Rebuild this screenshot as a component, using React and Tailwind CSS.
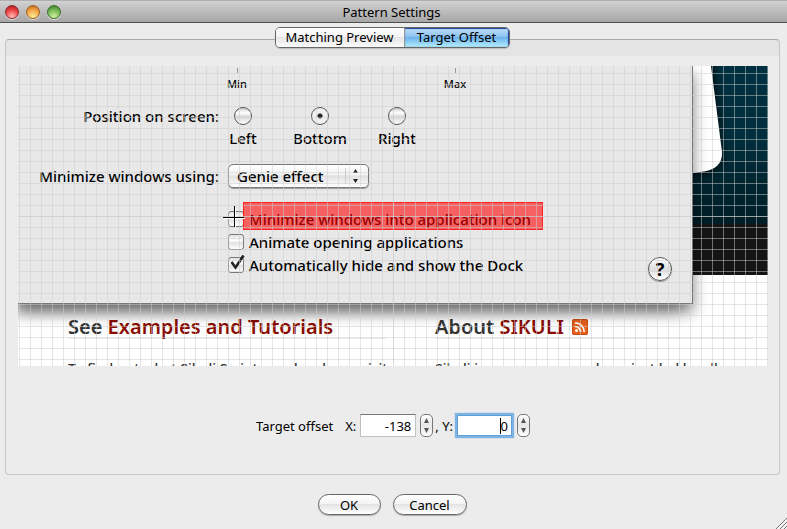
import React from 'react';

function TrafficLight({ label, className }) {
  return (
    <button
      aria-label={label}
      className={`h-[14px] w-[14px] rounded-full border shadow-[0_1px_0_#ddd] ${className}`}
    />
  );
}

function Stepper({ name }) {
  return (
    <div className="flex h-[23px] w-[13px] flex-col overflow-hidden rounded-[5px] border border-[#777] bg-gradient-to-b from-white via-[#e6e6e6] to-white">
      <button aria-label={`Increase ${name}`} className="flex flex-1 items-center justify-center">
        <svg width="5" height="5" viewBox="0 0 5 5">
          <path d="M2.5 0L5 5H0z" fill="#555" />
        </svg>
      </button>
      <button aria-label={`Decrease ${name}`} className="flex flex-1 items-center justify-center">
        <svg width="5" height="5" viewBox="0 0 5 5">
          <path d="M0 0h5L2.5 5z" fill="#555" />
        </svg>
      </button>
    </div>
  );
}

function RadioOption({ label, checked }) {
  return (
    <label className="flex w-12 flex-col items-center gap-1">
      <input
        type="radio"
        name="position"
        defaultChecked={checked}
        className="h-[18px] w-[18px] appearance-none rounded-full border border-[#555] bg-[linear-gradient(#ccc,#fff_30%,#d8d8d8_55%,#fff)] checked:bg-[radial-gradient(circle,#222_2px,#eee_3px,#f4f4f4)]"
      />
      <span className="leading-[18px]">{label}</span>
    </label>
  );
}

function CheckRow({ label, checked }) {
  return (
    <label className="flex h-[23px] items-center gap-[5px]">
      <span className="relative flex">
        <input
          type="checkbox"
          defaultChecked={checked}
          className="h-4 w-4 appearance-none rounded-[3px] border border-[#777] bg-[linear-gradient(#e2e2e2,#fff_40%,#e2e2e2_55%,#fff)]"
        />
        {checked && (
          <svg className="absolute -top-1 left-0" width="18" height="18" viewBox="0 0 18 18">
            <path d="M3.500 9L7.500 14.500L15.500 2.500" fill="none" stroke="#222" strokeWidth="2.600" />
          </svg>
        )}
      </span>
      <span>{label}</span>
    </label>
  );
}

function WebPage() {
  return (
    <div className="col-start-1 row-start-1 flex min-w-0 flex-col bg-white">
      <div className="flex h-[209px] shrink-0 justify-end bg-[linear-gradient(#003040,#002e3c_70px,#001e26_158px,#151515_158px)]">
        <svg width="76" height="209" viewBox="0 0 76 209">
          <defs>
            <filter id="glow" x="-50%" y="-20%" width="200%" height="140%">
              <feGaussianBlur stdDeviation="5" />
            </filter>
          </defs>
          <path
            d="M-20 -20H19L30 88Q31 105 8 109H-20z"
            fill="#000"
            opacity=".8"
            filter="url(#glow)"
          />
          <path d="M0 0H19L30 86Q31 104 8 106L0 107z" fill="#fff" />
          <path d="M0 158h76v51H0z" fill="#151515" />
        </svg>
      </div>
      <div className="flex pt-10 pr-[15px] pl-[50px] text-[#333]">
        <section className="w-[325px]">
          <h2 className="w-[318px] border-b border-[#e8e8e8] text-xl leading-[23px] font-semibold">
            See <span className="text-[#8b0c00]">Examples and Tutorials</span>
          </h2>
          <p className="mt-5 text-sm leading-5 font-medium whitespace-nowrap">
            To find out what Sikuli Script can do, please visit
          </p>
        </section>
        <section className="ml-[42px] flex-1">
          <h2 className="flex items-center gap-2 border-b border-[#e8e8e8] text-xl leading-[23px] font-semibold">
            <span>
              About <span className="text-[#8b0c00]">SIKULI</span>
            </span>
            <svg width="16" height="16" viewBox="0 0 16 16">
              <rect width="16" height="16" rx="2" fill="#e8601c" />
              <rect x=".5" y=".5" width="15" height="15" rx="2" fill="none" stroke="#c94a10" />
              <circle cx="4.500" cy="11.500" r="1.500" fill="#fff" />
              <path
                d="M3 7.500a5.500 5.500 0 0 1 5.500 5.500M3 3.800A9.200 9.200 0 0 1 12.200 13"
                fill="none"
                stroke="#fff"
                strokeWidth="1.700"
              />
            </svg>
          </h2>
          <p className="mt-5 text-sm leading-5 font-medium whitespace-nowrap">
            Sikuli is an open research project led by all
          </p>
        </section>
      </div>
    </div>
  );
}

function DockPanel() {
  return (
    <div className="relative col-start-1 row-start-1 mr-[75px] self-start border-r border-b border-[#777] bg-[#e8e8e8] pb-[27px] text-[15px] leading-[18px] font-medium text-black shadow-[0_8px_14px_rgba(0,0,0,0.5),-16px_8px_14px_rgba(0,0,0,0.2)]">
      <div className="flex pt-0.5 pl-[207px] text-[11px] leading-[14px]">
        <div className="flex w-6 flex-col items-center gap-1">
          <span className="h-[5px] w-px bg-[#999]" />
          <span>Min</span>
        </div>
        <div className="ml-[194px] flex w-6 flex-col items-center gap-1">
          <span className="h-[5px] w-px bg-[#999]" />
          <span>Max</span>
        </div>
      </div>
      <div className="mt-4 flex">
        <span className="w-[201px] shrink-0 text-right">Position on screen:</span>
        <div className="flex gap-[29px]">
          <RadioOption label="Left" />
          <RadioOption label="Bottom" checked />
          <RadioOption label="Right" />
        </div>
      </div>
      <div className="mt-[17px] flex items-center">
        <label htmlFor="effect" className="w-[201px] shrink-0 text-right">
          Minimize windows using:
        </label>
        <div className="relative ml-[9px] flex">
          <select
            id="effect"
            className="h-6 w-[141px] appearance-none rounded-[5px] border border-[#777] bg-[linear-gradient(#fff,#f2f2f2_45%,#e0e0e0_50%,#fff)] pl-2 shadow-[0_1px_1px_#999]"
          >
            <option>Genie effect</option>
          </select>
          <svg
            className="pointer-events-none absolute top-1 right-1"
            width="20"
            height="16"
            viewBox="0 0 20 16"
          >
            <path d="M.5 0v16" stroke="#ccc" />
            <path d="M10.500 1L13 5H8zM8 11h5l-2.500 4z" fill="#222" />
          </svg>
        </div>
      </div>
      <div className="mt-[19px] flex justify-between pr-5 pl-[210px]">
        <div>
          <CheckRow label="Minimize windows into application icon" />
          <CheckRow label="Animate opening applications" />
          <CheckRow label="Automatically hide and show the Dock" checked />
        </div>
        <button className="-mb-[5px] h-6 w-6 self-end rounded-full border border-[#555] bg-[linear-gradient(#fff,#ddd_50%,#fff)] text-lg leading-[22px] font-bold shadow-[0_1px_1px_#999]">
          ?
        </button>
      </div>
    </div>
  );
}

export default function App() {
  return (
    <div className="flex min-h-screen flex-col bg-[#ececec] font-['Noto_Sans','Lucida_Grande',sans-serif] text-[13px] leading-4 text-black">
      <header className="relative flex h-[23px] items-center justify-center border-t border-b border-t-[#b0b0b0] border-b-[#515151] bg-gradient-to-b from-[#d2d2d2] to-[#a6a6a6] pr-1">
        <div className="absolute top-1 left-[5px] flex gap-[7px]">
          <TrafficLight
            label="Close"
            className="border-[#8c2a2a] bg-[radial-gradient(circle_at_50%_90%,#ffc0c0,#f04545_55%,#a01818)]"
          />
          <TrafficLight
            label="Minimize"
            className="border-[#a06024] bg-[radial-gradient(circle_at_50%_90%,#fff09a,#f0a040_60%,#b05c18)]"
          />
          <TrafficLight
            label="Zoom"
            className="border-[#3f7030] bg-[radial-gradient(circle_at_50%_90%,#d4f5a0,#70b350_60%,#357025)]"
          />
        </div>
        <h1>Pattern Settings</h1>
      </header>

      <div
        role="tablist"
        className="relative z-10 mt-1 mr-[3px] -mb-[9px] flex h-[21px] self-center overflow-hidden rounded-[5px] border border-[#666] shadow-[0_1px_1px_#bbb]"
      >
        <button
          role="tab"
          aria-selected="false"
          className="w-[129px] border-r border-[#999] bg-[linear-gradient(#fff,#f4f4f4_45%,#e6e6e6_50%,#fafafa)] pb-0.5"
        >
          Matching Preview
        </button>
        <button
          role="tab"
          aria-selected="true"
          className="w-[104px] bg-[linear-gradient(#c4e0f8,#8cc2f0_45%,#6cb2ec_50%,#b4eefc)] pb-0.5 shadow-[inset_0_1px_1px_#1c3f9c,inset_-1px_0_1px_#1c3f9c]"
        >
          Target Offset
        </button>
      </div>

      <main className="mr-[7px] ml-[5px] rounded-[4px] border border-[#c6c6c6] border-t-[#aaa] bg-[linear-gradient(#e4e4e4_16px,#ececec_16px)] pt-[26px] pr-[11px] pb-[37px] pl-3">
        <div className="relative grid h-[300px] overflow-hidden">
          <WebPage />
          <DockPanel />
          <div className="absolute top-[136px] left-[225px] h-7 w-[300px] border border-[#ff2020] bg-[rgba(255,0,0,0.58)]" />
          <div className="absolute inset-0 bg-[linear-gradient(to_right,rgba(204,204,204,0.5)_1px,transparent_1px),linear-gradient(rgba(204,204,204,0.5)_1px,transparent_1px)] bg-[size:11px_11px] bg-[position:1px_7px]" />
          <div className="absolute top-[150px] h-px w-full bg-[#ccc]/50" />
          <div className="absolute left-[375px] h-full w-px bg-[#ccc]/50" />
          <svg
            className="absolute top-[140px] left-[205px]"
            width="23"
            height="23"
            viewBox="0 0 23 23"
            fill="none"
            shapeRendering="crispEdges"
          >
            <path d="M12.500 1v21M1 12.500h21" stroke="#fff" />
            <path d="M11.500 0v21M0 11.500h21" stroke="#000" />
          </svg>
        </div>

        <div className="mt-12 flex items-center justify-center">
          <span>Target offset</span>
          <label htmlFor="offset-x" className="ml-3">
            X:
          </label>
          <input
            id="offset-x"
            defaultValue="-138"
            className="ml-1 h-[23px] w-14 border border-[#c0c0c0] border-t-[#777] bg-white px-1 text-right"
          />
          <div className="ml-1">
            <Stepper name="X" />
          </div>
          <label htmlFor="offset-y" className="ml-0.5">
            , Y:
          </label>
          <div className="relative ml-1">
            <input
              id="offset-y"
              defaultValue="0"
              className="block h-[21px] w-[55px] border border-[#5f9fd8] bg-white px-[3px] text-right shadow-[0_0_1px_2px_#7db4e4]"
            />
            <span className="absolute top-[3px] right-[11px] h-4 w-px bg-black" />
          </div>
          <div className="ml-[5px]">
            <Stepper name="Y" />
          </div>
        </div>
      </main>

      <footer className="relative flex flex-1 justify-center gap-3 pt-[19px] pr-[3px]">
        <button className="h-[21px] w-[63px] rounded-full border border-[#666] bg-[linear-gradient(#fff,#f4f4f4_45%,#e4e4e4_50%,#fff)] shadow-[0_1px_1px_#aaa]">
          OK
        </button>
        <button className="h-[21px] w-[74px] rounded-full border border-[#666] bg-[linear-gradient(#fff,#f4f4f4_45%,#e4e4e4_50%,#fff)] shadow-[0_1px_1px_#aaa]">
          Cancel
        </button>
        <svg className="absolute right-0 bottom-0" width="11" height="11" viewBox="0 0 11 11">
          <path d="M0 11L11 0M4 11l7-7M8 11l3-3" stroke="#777" />
          <path d="M1.500 11L11 1.500M5.500 11L11 5.500" stroke="#fff" />
        </svg>
      </footer>
    </div>
  );
}
